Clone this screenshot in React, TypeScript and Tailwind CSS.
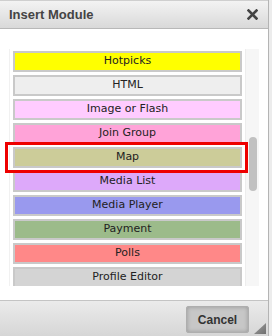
import React from 'react';

const modules = [
  { name: 'Hotpicks', bg: 'bg-[#ffff00]' },
  { name: 'HTML', bg: 'bg-[#eeeeee]' },
  { name: 'Image or Flash', bg: 'bg-[#ffccff]' },
  { name: 'Join Group', bg: 'bg-[#ffa3d8]' },
  { name: 'Map', bg: 'bg-[#cccc99]' },
  { name: 'Media List', bg: 'bg-[#dda9fa]' },
  { name: 'Media Player', bg: 'bg-[#9999ee]' },
  { name: 'Payment', bg: 'bg-[#9cbb8a]' },
  { name: 'Polls', bg: 'bg-[#ff8888]' },
  { name: 'Profile Editor', bg: 'bg-[#d4d4d4]' },
];

const CloseX = () => (
  <svg width="11" height="11" viewBox="0 0 11 11" className="block">
    <path d="M1.5 1.5 L9.5 9.5 M9.5 1.5 L1.5 9.5" stroke="#444" strokeWidth="2.6" strokeLinecap="square" />
  </svg>
);

const Grip = () => (
  <svg width="12" height="11" viewBox="0 0 12 11" className="block">
    <defs>
      <linearGradient id="grip" x1="0" y1="0" x2="1" y2="1">
        <stop offset="0" stopColor="#a0a0a0" />
        <stop offset="1" stopColor="#6f6f6f" />
      </linearGradient>
    </defs>
    <polygon points="12,0 12,11 0,11" fill="url(#grip)" />
  </svg>
);

export default function App() {
  return (
    <div className="relative w-[272px] h-[336px] bg-[#ececec] flex overflow-hidden">
      <div className="w-[269px] h-full flex flex-col bg-white border-r border-[#b4b4b4]">
        {/* Header */}
        <div className="h-[29px] flex-shrink-0 flex items-center justify-between pl-[9px] pr-[10px] bg-gradient-to-b from-[#f3f3f3] to-[#d9d9d9] border-t border-[#cfcfcf] border-b border-b-[#b8b8b8]">
          <span className="text-[13px] font-bold text-[#444] font-['Liberation_Sans',Arial,sans-serif] leading-none">Insert Module</span>
          <CloseX />
        </div>

        {/* Body */}
        <div className="flex-1 pt-[20px]">
          <div className="ml-[9px] w-[250px] h-[237px] flex border-l border-[#f1f1f1] overflow-hidden">
            <div className="flex-1 pl-[3px] pt-[2px] flex flex-col gap-[3px]">
              {modules.map((m) => (
                <div
                  key={m.name}
                  className={`h-[21px] w-[229px] flex-shrink-0 flex items-center justify-center border-2 border-[#c9c9c9] ${m.bg} text-[11px] text-[#222] font-['DejaVu_Sans',Verdana,sans-serif]`}
                >
                  {m.name}
                </div>
              ))}
            </div>
            <div className="w-[14px] h-full bg-[#f6f6f6] border-l border-[#ededed] pt-[88px] flex justify-center">
              <div className="w-[8px] h-[54px] rounded-full bg-[#c1c1c1]" />
            </div>
          </div>
        </div>

        {/* Footer */}
        <div className="h-[36px] flex-shrink-0 flex items-start justify-end pt-[5px] pr-[19px] bg-gradient-to-b from-[#ebebeb] to-[#d6d6d6] border-t border-[#c4c4c4]">
          <button className="w-[63px] h-[27px] rounded-[2px] border border-[#aeaeae] bg-[#c7c7c7] shadow-[inset_0_0_4px_rgba(0,0,0,0.25)] text-[12px] font-bold text-[#333] font-['Liberation_Sans',Arial,sans-serif]">
            Cancel
          </button>
        </div>
      </div>

      {/* tutorial highlight */}
      <div className="absolute left-[5px] top-[142px] w-[243px] h-[31px] border-[3px] border-[#ee0000] pointer-events-none" />

      {/* resize grip */}
      <div className="absolute left-[254px] top-[323px]">
        <Grip />
      </div>
    </div>
  );
}
